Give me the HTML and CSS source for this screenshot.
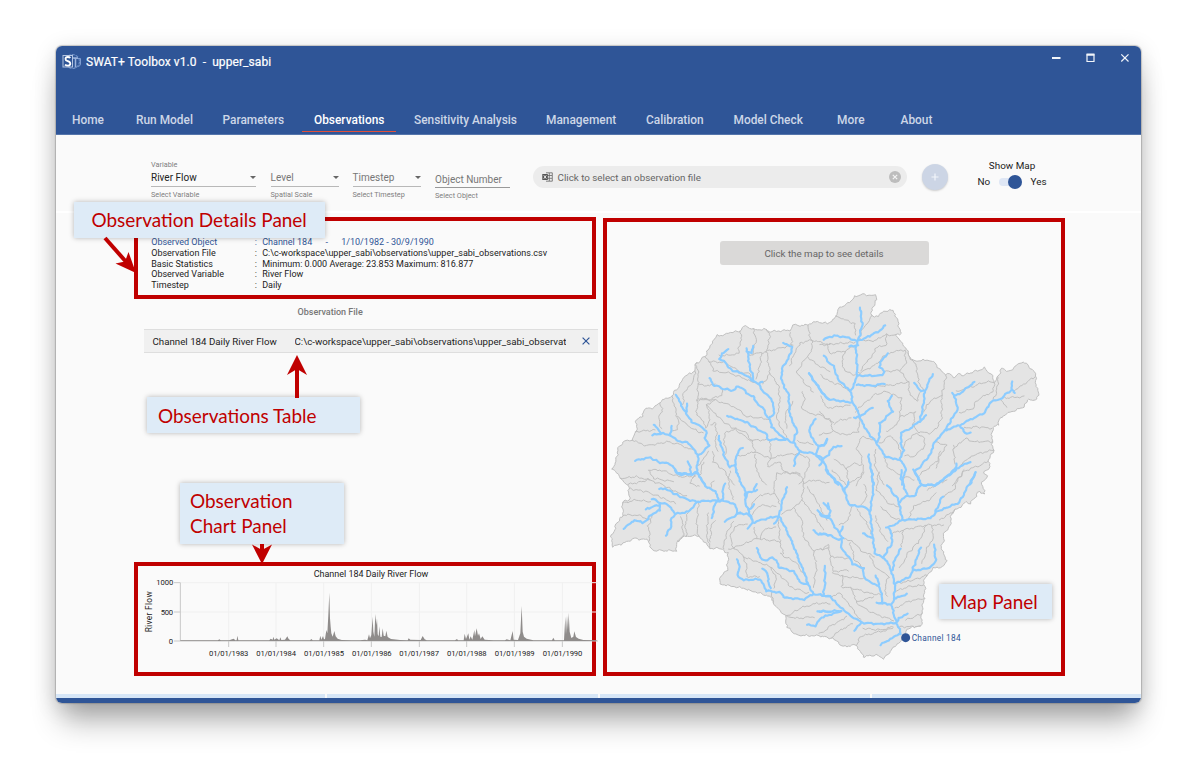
FILE: index.html
```html
<!DOCTYPE html>
<html lang="en">
<head>
<meta charset="utf-8">
<title>SWAT+ Toolbox v1.0 - upper_sabi</title>
<link rel="stylesheet" href="styles.css">
</head>
<body>
<div class="page">
<div class="window">
  <header class="header">
    <div class="titlebar">
      <svg class="logo" width="20" height="18" viewBox="0 0 20 18" fill="none">
        <circle cx="10.500" cy="8.500" r="7" stroke="#6f90c8" stroke-width="1.200" stroke-dasharray="3 1"/>
        <path d="M12 5.500h6.500v5.500q0 2-2.500 2.500" stroke="#7f9dd0"/>
        <path d="M10 5h6M13.500 5v9.500" stroke="#9db4dd" stroke-width="1.500"/>
        <rect x="1" y="2.500" width="9.500" height="11.500" fill="#2f5597" stroke="#b4c5e2"/>
        <path d="M8.300 5Q7.500 4 5.800 4 3.500 4 3.500 6 3.500 7.600 5.800 8.200 8.300 9 8.300 10.700 8.300 12.600 5.800 12.600 4 12.600 3 11.600" stroke="#fff" stroke-width="1.800"/>
      </svg>
      <span class="title">SWAT+ Toolbox v1.0 &nbsp;-&nbsp; upper_sabi</span>
      <svg class="controls" width="80" height="12" viewBox="0 0 80 12" fill="none" stroke="#f2f5fa">
        <path d="M1 6h8.500" stroke-width="2"/><path d="M36 2.800h7v6.700h-7z" stroke-width="1.200"/><path d="M35.500 2.600h8" stroke-width="2"/><path d="M70.300 2.300l7.200 7.200M77.500 2.300l-7.200 7.200" stroke-width="1.200"/>
      </svg>
    </div>
    <nav class="nav"><span>Home</span><span>Run Model</span><span>Parameters</span><span class="active">Observations</span><span>Sensitivity Analysis</span><span>Management</span><span>Calibration</span><span>Model Check</span><span>More</span><span>About</span></nav>
  </header>

  <div class="toolbar">
    <div class="field f-variable"><small>Variable</small><div class="value dark">River Flow<i class="caret"></i></div><small>Select Variable</small></div>
    <div class="field f-level"><small></small><div class="value">Level<i class="caret"></i></div><small>Spatial Scale</small></div>
    <div class="field f-step"><small></small><div class="value">Timestep<i class="caret"></i></div><small>Select Timestep</small></div>
    <div class="field f-object"><small></small><div class="value thin">Object Number</div><small>Select Object</small></div>
    <div class="filebox">
      <svg width="11" height="10" viewBox="0 0 11 10" fill="none" stroke="#666"><path d="M4 .8h6.300v8.400H4M4 3.500h6M4 6.300h6M7.300 1v8" stroke-width=".8"/><rect x=".3" y="2" width="5.500" height="6" fill="#555" stroke="none"/><path d="M1.800 3.300l2.500 3.400M4.300 3.300l-2.500 3.400" stroke="#eee"/></svg>
      <span>Click to select an observation file</span>
      <svg width="12" height="12" viewBox="0 0 12 12"><circle cx="6" cy="6" r="6" fill="#bdbdbd"/><path d="M3.800 3.800l4.400 4.400M8.200 3.800l-4.400 4.400" stroke="#f3f3f3" stroke-width="1.200"/></svg>
    </div>
    <div class="add"><svg width="8" height="8" viewBox="0 0 8 8"><path d="M4 .5v7M.5 4h7" stroke="#f2f5fa" stroke-width="1.200"/></svg></div>
    <div class="mapswitch"><div>Show Map</div><div class="row"><span>No</span><span class="switch"><i></i></span><span>Yes</span></div></div>
  </div>

  <main class="content">
    <div class="left">
      <section class="frame details">
        <div class="drow blue"><span>Observed Object</span><span>:</span><span>Channel 184<b>-</b>1/10/1982 - 30/9/1990</span></div>
        <div class="drow"><span>Observation File</span><span>:</span><span class="path">C:\c-workspace\upper_sabi\observations\upper_sabi_observations.csv</span></div>
        <div class="drow"><span>Basic Statistics</span><span>:</span><span>Minimum: 0.000 Average: 23.853 Maximum: 816.877</span></div>
        <div class="drow"><span>Observed Variable</span><span>:</span><span>River Flow</span></div>
        <div class="drow"><span>Timestep</span><span>:</span><span>Daily</span></div>
      </section>
      <section class="table">
        <div class="thead">Observation File</div>
        <div class="trow"><span class="name">Channel 184 Daily River Flow</span><span class="file">C:\c-workspace\upper_sabi\observations\upper_sabi_observations.csv</span>
          <svg width="8" height="8" viewBox="0 0 8 8"><path d="M.6.6l6.800 6.800M7.400.6L.6 7.400" stroke="#2f5597" stroke-width="1.200"/></svg></div>
      </section>
      <section class="frame chart">
        <svg width="462" height="106" viewBox="24 273 1386 318">
          <g stroke="#f0f0f0" stroke-width="3"><path d="M151 323H1404M151 411H1404M296 323V498M438 323V498M581 323V498M724 323V498M868 323V498M1010 323V498M1153 323V498M1297 323V498"/></g>
          <path d="M151 323V498M132 323H151M132 411H151M132 498H1404M296 498V516M438 498V516M581 498V516M724 498V516M868 498V516M1010 498V516M1153 498V516M1297 498V516" stroke="#c8c8c8" stroke-width="3" fill="none"/>
          <path fill="#8f8c8b" d="M151 498V496H264L268 493 272 496H298L306 493 312 491 315 496H320L322 482 325 496H418L422 491 428 494 430 485 433 494 440 490 448 496 451 487 454 495 465 494 472 484 476 492 481 496H540L544 492 548 496H568L571 482 574 494 579 483 582 493 585 492 589 465 592 475 595 420 598 353 600 430 602 455 604 475 608 485 613 468 617 484 623 491 635 495 665 496H690L705 494 712 496 717 478 720 490 724 480 728 425 730 470 733 485 736 417 739 450 741 430 743 478 746 484 748 454 751 485 755 486 758 460 761 482 766 484 769 467 773 486 783 492 810 495 833 496 836 490 841 494 872 495 878 483 884 493 890 496H975L981 492 984 496H1001L1004 476 1008 492 1015 475 1018 494 1022 484 1027 494 1033 465 1035 484 1040 460 1044 482 1047 475 1052 492 1057 484 1064 494 1090 496H1125L1130 493 1141 496 1148 468 1151 494 1164 495 1171 475 1175 393 1178 470 1182 485 1190 491 1210 496H1266L1270 488 1274 496H1302L1306 425 1308 478 1311 422 1314 465 1316 413 1319 470 1324 489 1330 485 1333 469 1338 486 1346 491 1360 495 1400 496V498Z"/>
          <g class="charttext"><text x="551" y="306" font-size="27" textLength="344">Channel 184 Daily River Flow</text>
          <text x="79" y="331" textLength="51">1000</text><text x="92" y="419" textLength="37">500</text><text x="116" y="506">0</text>
          <text transform="translate(66 472) rotate(-90)" font-size="25" textLength="123">River Flow</text>
          <text x="237" y="544" textLength="118">01/01/1983</text><text x="379" y="544" textLength="119">01/01/1984</text><text x="522" y="544" textLength="120">01/01/1985</text><text x="666" y="544" textLength="119">01/01/1986</text><text x="808" y="544" textLength="119">01/01/1987</text><text x="951" y="544" textLength="119">01/01/1988</text><text x="1094" y="544" textLength="120">01/01/1989</text><text x="1238" y="544" textLength="119">01/01/1990</text></g>
        </svg>
      </section>
    </div>

    <section class="frame map">
      <div class="hint">Click the map to see details</div>
      <svg class="basin" width="454" height="385" viewBox="21 0 1362 1155" fill="none" stroke-linejoin="round" stroke-linecap="round">
        <g class="natural" data-amp="3.2" stroke="#c0c0c0" stroke-width="3">
          <path fill="#e4e4e4" d="M40 552L50 520 55 490 70 470 95 465 110 440 108 402 128 395 132 372 165 368 180 352 215 332 240 302 250 275 285 258 288 235 315 215 330 185 350 152 375 150 385 143 420 138 437 122 460 134 500 133 510 140 570 135 580 120 610 122 625 118 655 110 680 116 710 97 712 72 745 55 765 35 790 28 825 32 832 45 815 70 815 92 835 95 850 78 878 76 892 105 902 145 885 150 910 178 925 205 940 228 990 225 1010 240 1038 270 1052 265 1060 278 1078 265 1085 272 1140 255 1150 248 1180 275 1182 292 1195 275 1205 248 1220 260 1240 250 1255 233 1280 235 1305 262 1310 310 1318 328 1300 350 1288 340 1270 365 1228 382 1200 400 1195 420 1180 425 1175 460 1180 495 1165 530 1170 545 1152 565 1162 575 1145 590 1155 627 1138 620 1125 640 1110 655 1100 650 1065 675 1055 685 1050 727 1032 745 1030 770 1022 790 1042 827 1028 845 1000 850 980 870 972 885 975 910 970 955 965 985 965 1025 935 1025 920 1040 910 1055 885 1085 850 1122 830 1110 790 1115 770 1080 730 1085 700 1060 660 1053 590 1050 560 1025 558 995 520 955 510 935 430 910 360 897 362 873 382 855 385 805 360 790 330 790 310 770 295 753 260 753 230 770 230 797 165 797 150 785 145 765 100 760 75 773 40 785 32 755 45 735 48 715 68 695 68 650 88 645 85 600 60 580Z"/>
          <path d="M315 215L330 230 375 232 420 260 450 268 455 285M288 235L295 270 293 345 290 390M330 230L340 258 390 265 430 280 475 297M293 298L330 303 345 295M293 340L330 343 365 330 370 312M420 138L425 165 415 190 420 205 375 212 355 212M460 134L468 165 455 210 440 210M500 133L510 155 500 200 460 208M500 200L540 190 580 180M570 140L575 165 575 185M625 118L628 150 635 165 600 175 578 215 570 240M635 165L638 190 622 215 590 260 610 290 640 320M635 165L690 180M622 215L645 235 690 260M500 200L510 265 490 295M510 265L535 300 540 350 530 400 560 460M485 205L480 240 470 280M293 345L345 345 400 365 440 395 490 400 508 405M345 345L320 360 330 400 320 430M320 360L370 410 400 430 450 465 505 465M285 258L280 290 250 325 250 360M215 332L225 370 235 410 232 435 210 440M180 352L188 380 175 400 183 430M108 440L165 435M95 465L140 482 205 470 235 478 290 500M235 395L250 410 275 430 310 445M290 390L310 410 320 430M330 420L345 410 350 450 345 480 355 500M375 520L378 490 370 465 380 440 410 430 440 445 455 465 465 500 415 515M465 500L510 520 550 510 600 505M510 465L512 520 500 545 540 530 550 560 600 570M605 320L615 340 605 365 625 385 660 390 700 410M592 470L640 478M580 350L555 390 560 430M148 555L180 555 235 575 290 575M148 555L160 580 220 590M85 598L150 585M340 500L340 530 370 555 400 600M325 500L295 540M310 530L300 570M465 505L470 560 500 600M600 510L630 520 620 560 600 600"/>
          <path transform="translate(660 0)" d="M50 95L85 108 105 118 105 150M155 92L135 125 118 150M0 180L60 175 105 172M118 160L150 170 200 150 225 150M255 195L220 200 190 215 165 240 118 265M200 150L198 180 165 190 155 215 120 255M255 195L258 240 240 255 195 260M265 205L290 250 295 290 310 315M240 255L265 290 220 300 160 305M20 180L30 205 75 198 108 180M75 198L65 235 75 260 105 270M265 290L270 330 290 350 300 320M378 270L370 310 365 330 330 350 310 380M365 330L365 400 350 430 330 445 290 440 280 420 285 380 240 395 230 420 200 440M522 292L500 290 440 310 410 320M522 292L520 320 470 345 460 370 420 385M535 275L530 320 520 345M645 275L605 300 580 320M545 340L610 335M545 345L560 370M515 430L470 425 430 430M515 470L460 470 435 460 400 490M520 495L460 510 420 540M505 530L430 560 400 600M400 480L405 540M345 470L380 480 350 530 300 570M250 490L260 465 290 445 315 460 310 490 280 515 255 510M240 395L245 340 200 320 160 330 105 380M180 475L210 450 235 480 245 515M120 395L115 440 75 450 40 440 0 450M40 440L30 410 0 380M90 400L60 405 40 415M165 465L125 455 110 490 125 520 130 560 110 600M0 270L30 290 60 300 90 318M0 330L20 370 90 360M165 490L165 540 190 600M195 520L200 545 240 570M40 520L80 550 100 535 125 540M80 550L85 600M360 500L350 550"/>
          <path transform="translate(0 555)" d="M60 25L110 20 150 30 200 50 260 80M85 55L140 65 190 85 230 100M68 100L110 90 150 95M68 135L110 135 150 150M160 130L145 170 150 210M230 215L250 200 245 140M295 198L290 160 295 100M260 198L255 160 265 130M330 235L320 190 325 130M330 215L335 160 345 150M370 235L380 190 400 155M400 230L390 200 405 170 440 160M385 240L470 205 540 215 550 250M470 205L460 170M540 215L535 150M480 205L490 180 530 170M400 230L430 260 470 275 510 290M430 260L440 290 440 320 480 320M540 250L590 280 620 330M520 355L530 330 510 290 545 320 570 350 625 370M515 365L520 400M558 440L600 415 650 400 690 400M560 440L600 445 640 440M540 100L520 60 530 10 600 8 612 40 605 90 580 115 545 130M612 40L640 30 690 40M605 90L640 130 670 180M580 115L605 150 610 200 640 240 650 290 640 350M640 240L690 235M620 50L650 90 680 150M290 5L270 40 300 50M390 0L385 40 400 90M450 110L480 75 525 70M340 30L330 60M460 130L480 105 530 110"/>
          <path transform="translate(660 555)" d="M35 0L80 45 135 10M135 40L140 80 125 105M175 5L170 60 205 100 240 110M95 110L85 150 60 165M110 120L135 150 155 190M60 205L90 210 130 245 165 260M0 240L25 225 30 260 85 265M30 260L40 305 85 300M90 215L105 270 135 300M165 135L180 180 200 215M180 110L215 140 240 150M265 150L280 110 325 90 345 70M405 120L360 150M372 165L320 165 250 180 215 190M320 165L300 210 265 250 240 290M250 180L245 230M335 165L340 200 320 240 305 280M320 315L280 330 230 340M312 345L265 350 225 365M310 385L260 395 225 415M305 430L260 450M305 470L265 470 240 470M40 310L75 320 130 325M70 320L65 350 100 355 150 370 185 375M95 355L105 390 125 410 170 435 220 450M110 395L160 380M30 380L60 370 100 420 120 450M110 525L120 500 160 490 220 475M35 505L60 480 100 460M0 490L30 470 80 440M130 475L180 480 220 470M200 380L195 350 205 320 165 290 150 260M320 60L380 30M430 0L400 60 370 80M245 30L265 20 285 30"/>
        </g>
        <g class="natural" data-amp="2.4" stroke="#8cccff" stroke-width="6.500">
          <path d="M383 191L366 205 360 220 380 238 400 258 430 265 455 285 475 297 488 290M475 297L490 320 510 335 522 365 520 390 508 402M440 188L444 210 450 250 458 270 462 290M461 183L452 205 442 200M327 281L340 298 365 310 400 317 408 305 430 310 440 325 460 335 470 355 490 370 498 388 508 400 515 425 535 445 555 462 578 473M379 393L410 402 440 412 470 432 500 448 505 465 530 463 555 465M550 172L577 187 570 210 548 250 543 275 552 305 566 330 570 395 592 435 580 470 600 500 640 505 670 520M600 500L585 520 583 545M626 265L645 290 665 320 685 343M646 401L626 435 640 465 655 485 648 505M683 460L678 475 655 485M229 331L245 360 258 385 275 410 305 425 320 445 315 460 326 482 295 515 290 560 315 600M263 357L258 380M160 417L185 445 155 450M185 445L212 450 214 422M212 450L230 467 260 472 280 490 295 512M103 527L125 522 150 518 180 532 210 536 235 563 270 568 290 565M263 530L272 545 272 568M359 450L356 465 365 485 375 520 390 545 405 540 412 567M427 488L410 508 405 540"/>
          <path transform="translate(660 0)" d="M120 70L127 120 115 165 108 185 112 265 105 290 92 318 97 350 120 395 135 430 170 475 195 515 240 525 258 548 245 600M10 163L40 152 70 155 115 168 155 150 175 140 197 121M88 185L112 180M204 207L180 232 180 245 195 260 180 272 112 272M194 295L160 302 110 300M12 213L40 245 55 285 92 318M-34 265L-10 298 22 342 60 348 97 352M156 366L120 395 100 398M217 332L203 348 218 378 180 415 178 455 170 475M338 267L315 318 310 360 300 410 245 445 242 475 250 495 240 525M285 293L295 315 315 318M320 390L300 410M465 289L430 320 402 333 398 325M402 333L413 370 385 420 375 437 420 420 490 385 515 350 545 340 575 312 577 290M575 312L585 325M375 437L345 470 325 520 282 562 305 600M420 420L435 445 452 443M450 530L405 553 350 600 305 600M410 535L405 553M467 562L450 600M145 510L155 560 160 600M65 484L40 485 25 510 5 525 35 575 55 600M22 462L12 480 -5 485M-10 515L5 525 0 540"/>
          <path transform="translate(0 555)" d="M225 3L240 14 280 12 290 5 310 35 320 52 348 65 355 92 385 95 405 105 412 130 445 132 460 158M177 58L195 55 225 72 260 88 290 95 330 92 355 92M155 86L180 98 178 120 160 130 130 158 105 150 72 177M135 118L175 105M180 98L205 105 228 132 265 125 290 97M228 132L213 145 215 165 198 198M373 38L368 70 370 88 350 95 340 118 337 145M377 153L400 140 420 128M410 0L412 12 420 35 437 65 435 95 445 120 452 140 460 158 490 148 525 140 537 140 545 100 562 52M471 60L445 68 435 90M468 42L462 60M460 105L448 118M443 176L460 158M522 160L537 140 560 180 580 225 600 280 612 305 625 345 640 372M470 236L485 268 505 272 515 262 530 270 535 290 580 305 600 335 625 345M413 267L418 295 412 318 430 330 480 328 500 362 540 368 555 383 610 388 640 372 690 380M487 297L500 303 510 355M675 290L675 340 670 372M639 180L655 192 690 195M652 423L690 426M622 464L645 468 665 442 690 435 725 423M655 122L668 135 690 140"/>
          <path transform="translate(660 555)" d="M18 0L70 55 88 105 130 110 150 125 158 200 165 250 195 265 215 305 225 345 222 385 215 405 220 430 230 460 243 490 182 524M85 38L72 65M155 0L160 60 150 125M245 0L242 20 262 78 240 95M262 78L288 78 292 55 305 45 345 45 410 0M282 0L305 45M200 45L235 90 247 150 200 175M467 8L415 100 350 125 330 145 250 150M367 78L345 130M210 175L218 215 200 245 190 262M127 190L155 203M241 235L222 275 218 300M302 232L278 300 270 320 225 342M343 225L347 275 325 295 278 302M260 372L222 387M170 398L215 403M168 318L178 350 190 400M262 432L235 445 228 460M0 135L28 145 65 200 65 235 90 265 97 282 130 295 132 325 178 350M25 98L30 120 28 140M12 100L25 115M67 170L60 185M0 190L30 195 50 208 68 205M0 375L30 380 65 415 95 440 125 458 180 462 230 458M125 458L102 482M0 425L65 422"/>
        </g>
        <circle cx="917" cy="1058" r="13.500" fill="#2f5597"/>
        <text class="chan" x="935" y="1068" font-size="25" textLength="147">Channel 184</text>
      </svg>
    </section>
  </main>
  <footer class="footer"><i></i><i></i><i></i><i></i></footer>
</div>

<div class="callout c-details">Observation Details Panel</div>
<div class="callout c-table">Observations Table</div>
<div class="callout c-chart">Observation<br>Chart Panel</div>
<div class="callout c-map">Map Panel</div>
<svg class="arrows" width="1200" height="767" viewBox="0 0 1200 767" fill="#c00000" stroke="#c00000">
  <path d="M105 238L128 264" stroke-width="4"/><path stroke="none" d="M136 273L115.500 263.500 125 261.500 128.500 252Z"/>
  <path d="M297 398V367" stroke-width="4"/><path stroke="none" d="M297 355L307 375 297 369 287 375Z"/>
  <path d="M262 544V552" stroke-width="4"/><path stroke="none" d="M262 564L252 544.500 262 550 272 544.500Z"/>
</svg>
</div>
<script src="terrain.js"></script>
</body>
</html>
```
FILE: terrain.js
```js
// Gives straight map segments a natural meander. The offset depends only on
// the map position, so lines that share a point stay joined.
const STEP = 6;

function offset(x, y, amp) {
  return [
    x + amp * (0.6 * Math.sin(y * 0.19 + 2 * Math.sin(x * 0.07)) + 0.5 * Math.sin(y * 0.41 + x * 0.11)),
    y + amp * (0.6 * Math.sin(x * 0.21 + 2 * Math.sin(y * 0.06)) + 0.5 * Math.sin(x * 0.43 - y * 0.13))
  ];
}

function meander(points, dx, dy, amp) {
  const out = [];
  points.forEach(([x, y], i) => {
    const [px, py] = i ? points[i - 1] : [x, y];
    const n = Math.max(1, Math.round(Math.hypot(x - px, y - py) / STEP));
    for (let k = 1; k <= n; k++) {
      const [ox, oy] = offset(px + (x - px) * k / n + dx, py + (y - py) * k / n + dy, amp);
      out.push((ox - dx).toFixed(1) + " " + (oy - dy).toFixed(1));
    }
  });
  return "M" + out.join("L");
}

document.querySelectorAll(".natural").forEach(group => {
  const amp = Number(group.dataset.amp);
  group.querySelectorAll("path").forEach(path => {
    const [dx, dy] = (path.getAttribute("transform") || "0 0").match(/-?\d+/g).map(Number);
    const d = path.getAttribute("d");
    const closed = d.endsWith("Z");
    path.setAttribute("d", d.split("M").slice(1).map(part => {
      const nums = part.match(/-?\d+/g).map(Number);
      const points = [];
      for (let i = 0; i < nums.length; i += 2) points.push([nums[i], nums[i + 1]]);
      if (closed) points.push(points[0]);
      return meander(points, dx, dy, amp) + (closed ? "Z" : "");
    }).join(""));
  });
});
```
FILE: styles.css
```css
* { box-sizing: border-box; }
body { margin: 0; background: #fff; font-family: Roboto, "Liberation Sans", sans-serif; overflow: hidden; }
.page { position: relative; height: 767px; padding: 46px 59px 0 56px; overflow: hidden; }
.window { height: 657px; border-radius: 6px; background: #fafafa; display: flex; flex-direction: column; overflow: hidden; box-shadow: 0 0 1px 1px rgba(90,90,90,.3), 0 24px 28px -6px rgba(0,0,0,.3), 0 4px 22px rgba(0,0,0,.15); }
.header { height: 89px; background: #2f5597; color: #fff; flex: none; border-bottom: 1px solid #5575ab; }
.titlebar { display: flex; height: 32px; align-items: center; padding: 0 10px 0 6px; }
.title { font-size: 12px; font-weight: 400; margin-left: 4px; letter-spacing: .07px; flex: 1; white-space: pre; -webkit-text-stroke: .2px #fff; }
.controls { margin-bottom: 8px; }
.nav { display: grid; grid-template-columns: 64px 86.5px 91.5px 100px 132px 100px 87.5px 103.5px 63.5px auto; padding: 28px 0 0 16px; font-size: 11.900px; font-weight: 500; line-height: 28px; color: #cdd7e7; white-space: nowrap; }
.nav .active { color: #fff; width: 94px; margin-left: -12px; padding-left: 12px; height: 26px; border-bottom: 1px solid #e2503a; }
.toolbar { height: 78px; flex: none; display: flex; padding: 24px 0 0 95px; border-bottom: 2px solid #fff; }
.field { font-size: 10px; color: #777; flex: none; white-space: nowrap; }
.field small { display: block; height: 11px; font-size: 7.300px; line-height: 11px; color: #808080; }
.value { position: relative; height: 17px; line-height: 15px; margin-top: 0; margin-bottom: 1.500px; border-bottom: 1.500px solid #b8b8b8; }
.dark { color: #222; }
.value.thin { border-bottom: 1px solid #999; padding-top: 2px; }
.caret { position: absolute; right: 0; top: 6px; border: 3px solid transparent; border-top-color: #666; border-bottom: 0; }
.f-variable { width: 105px; } .f-level { width: 68px; margin-left: 14.500px; } .f-step { width: 68px; margin-left: 14px; } .f-object { width: 75px; margin-left: 14.500px; }
.f-object .value { height: 18px; }
.filebox { margin: 7px 0 0 22.500px; width: 374px; height: 22px; border-radius: 11px; background: #ececec; display: flex; align-items: center; padding: 0 6px 0 9px; font-size: 9.800px; color: #666; flex: none; }
.filebox span { flex: 1; margin-left: 5px; }
.add { width: 26px; height: 26px; border-radius: 50%; background: #ccd5e5; margin: 5px 0 0 15px; box-shadow: 0 1px 2px #ccc; display: flex; align-items: center; justify-content: center; flex: none; }
.mapswitch { margin: 1px 0 0 30px; width: 69px; font-size: 9.900px; color: #222; text-align: center; line-height: 12px; white-space: nowrap; }
.mapswitch .row { display: flex; justify-content: space-between; margin-top: 4px; }
.switch { width: 23px; height: 8px; margin-top: 2px; border-radius: 4px; background: #dfe7f5; position: relative; }
.switch i { position: absolute; right: 0; top: -3px; width: 14px; height: 14px; border-radius: 50%; background: #2f5597; }
.content { display: flex; gap: 7px; padding: 4px 0 0 78px; height: 480px; flex: none; }
.left { width: 462px; display: flex; flex-direction: column; }
.frame { border: 4px solid #c00000; }
.details { height: 82px; flex: none; padding: 16px 0 0 13.200px; font-size: 9px; color: #222; white-space: nowrap; }
.drow { display: grid; grid-template-columns: 103.500px 7.500px auto; line-height: 10.800px; height: 10.800px; }
.blue { color: #2f5597; }
.blue b { display: inline-block; width: 29px; text-align: center; font-weight: 400; }
.table { margin: 7px -2px 0 10px; height: 256px; }
.thead { font-size: 9px; font-weight: 500; color: #777; line-height: 12px; padding-left: 153.500px; }
.trow { margin-top: 11px; height: 24px; background: #f0f0f0; border: solid #dedede; border-width: 1px 0; display: flex; align-items: center; padding: 0 8px 0 8.500px; font-size: 9.720px; color: #222; white-space: nowrap; }
.name { width: 142px; } .file { width: 271px; overflow: hidden; } .trow svg { margin-left: 16px; }
.chart { height: 114px; flex: none; overflow: visible; }
.chart svg { display: block; }
.charttext { font-size: 23px; fill: #222; }
.map { width: 462px; height: 458px; margin-top: 1px; flex: none; padding-top: 19px; }
.hint { width: 209px; height: 24px; border-radius: 3px; background: #dad9d8; margin-left: 112.500px; font-size: 9.750px; color: #666; text-align: center; line-height: 25px; }
.basin { display: block; margin-top: 20px; }
.chan { fill: #2f5597; font-family: Roboto, sans-serif; }
.footer { margin-top: auto; height: 9px; flex: none; border-bottom: 5px solid #2f5597; display: grid; grid-template-columns: 269px 270.500px 270px 1fr; gap: 2px; }
.footer i { background: #d6e6f7; }
.callout { position: absolute; background: #deebf7; color: #c00000; font: 18.950px/25px Lato, "Noto Sans", sans-serif; box-shadow: 0 0 5px rgba(0,0,0,.28); white-space: nowrap; }
.c-details { left: 73.500px; top: 202px; width: 251.500px; height: 36px; padding: 5px 0 0 18px; }
.c-table { left: 147px; top: 397px; width: 213px; height: 36px; padding: 6px 0 0 11px; }
.c-chart { left: 180px; top: 483px; width: 164px; height: 61px; padding: 5px 0 0 10px; }
.c-map { left: 939px; top: 584px; width: 113px; height: 35px; padding: 5px 0 0 11px; }
.arrows { position: absolute; left: 0; top: 0; }
```
